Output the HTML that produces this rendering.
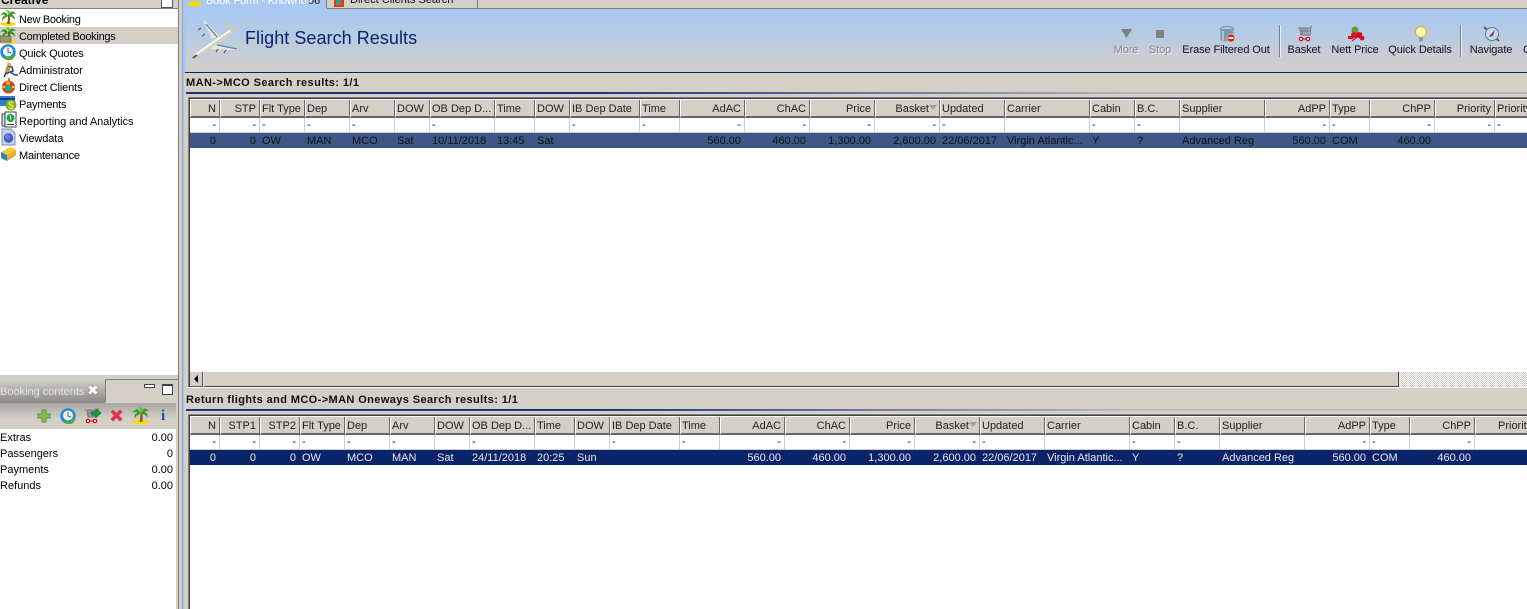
<!DOCTYPE html>
<html><head><meta charset="utf-8"><style>
html,body{margin:0;padding:0}
body{width:1527px;height:609px;overflow:hidden;position:relative;background:#d4d0c8;font:11px/13px "Liberation Sans",sans-serif;color:#000}
.a{position:absolute;white-space:nowrap}
svg{position:absolute;overflow:visible}
.n{left:19px}
table{position:absolute;left:190px;border-collapse:separate;border-spacing:0;table-layout:fixed;font:11px/13px "Liberation Sans",sans-serif;background:#fff}
td{padding:0 3px 0 2px;overflow:hidden;white-space:nowrap;box-sizing:border-box}
tr.h td{height:18px;background:#d4d0c8;border-left:1px solid #fff;border-top:0;border-right:1px solid #666;border-bottom:2px solid #666;padding:2px 3px 0 1px;color:#222}
tr.f td{height:15px;border-right:1px solid #d4d0c8;border-bottom:1px solid #d4d0c8;color:#222;padding-top:1px;padding-right:3px}
tr.s td{height:15px;color:#ddd;padding-top:2px;padding-right:4px}
.t1 tr.s td{background:#3f5787;color:#101010}
.t2 tr.s td{background:#0a246a;color:#e8e8e8}
td.r{text-align:right}
.tb{font-size:11px;text-align:center;color:#111;letter-spacing:-.1px}
</style></head><body>
<svg width="0" height="0" style="position:absolute"><defs>
<symbol id="palm" viewBox="0 0 16 16"><ellipse cx="8" cy="14" rx="7.500" ry="2" fill="#ffd800"/><path d="M7 14C8 10 8 7 8 5h2c0 3 0 6 0 9z" fill="#8a5a20"/><path d="M8 6C6 1 3 1 0 6 3 4 4 4 5 6 3 6 2 8 2 11 5 7 7 7 8 6zM9 6C10 1 13 0 16 4 13 3 12 4 12 5 14 5 15 8 15 10 13 7 11 7 9 6z" fill="#2f9a1e"/><path d="M8 5C8 2 7 1 5 1 9-1 11 2 9 5z" fill="#60c020"/></symbol>
<symbol id="clock" viewBox="0 0 16 16"><circle cx="8" cy="8" r="7.700" fill="#1d8ae0"/><circle cx="8" cy="7.500" r="5" fill="#f3f3ee"/><path d="M8 4v4l3 1" stroke="#555" fill="none"/><path d="M3 11c2 3 7 3 10 0l3 0-3 4-2 1H6z" fill="#4fb030"/></symbol>
<symbol id="cart" viewBox="0 0 16 16"><path d="M1 2h12l2-2M3 2l1 7h9l1-7M5 2v7M7 2v7M9 2v7M11 2v7M3 5h11" stroke="#777" fill="none"/><circle cx="4" cy="13" r="1.700" fill="#fff" stroke="#d00" stroke-width="1.200"/><circle cx="11" cy="13" r="1.700" fill="#fff" stroke="#d00" stroke-width="1.200"/><path d="M6 13h3" stroke="#d00"/></symbol>
</defs></svg>

<!-- top strip -->
<div class="a" style="left:0;top:0;width:178px;height:8px;background:#d4d0c8;border-bottom:1px solid #808080"></div>
<div class="a" style="left:1px;top:-7px;font:bold 12px/14px 'Liberation Sans',sans-serif">Creative</div>
<div class="a" style="left:161px;top:-3px;width:10px;height:9px;background:#fff;border:1px solid #555"></div>

<!-- nav -->
<div class="a" style="left:0;top:9px;width:178px;height:366px;background:#fff"></div>
<div class="a" style="left:0;top:27px;width:178px;height:17px;background:#d4d0c8"></div>
<svg style="left:0;top:10px" width="16" height="16"><use href="#palm" width="16" height="16"/></svg>
<svg style="left:0;top:27px" width="16" height="16"><use href="#palm" width="16" height="16"/><rect x="0" y="9" width="11" height="6" fill="#9a9a70" stroke="#444" stroke-width=".6"/></svg>
<svg style="left:0;top:44px" width="16" height="16"><use href="#clock" width="16" height="16"/></svg>
<svg style="left:3px;top:62px" width="14" height="15"><circle cx="6" cy="2.500" r="2" fill="#d9a06a"/><path d="M4 5l5 0 1 4-3 1 5 3h3M5 7L3 11 1 15M6 10l-2 2" stroke="#243a8c" stroke-width="1.500" fill="none"/><path d="M3 5h4v5H2z" fill="#b9a030"/></svg>
<svg style="left:1px;top:78px" width="15" height="16"><path d="M7 0h2v3H7z" fill="#e08020"/><circle cx="7.500" cy="9" r="6.500" fill="#e63c10"/><circle cx="7" cy="5" r="2" fill="#ffb020"/><rect x="4" y="7" width="7" height="6" fill="#2fa080"/><path d="M1 9h3M11 9h3" stroke="#ffc020" stroke-width="2"/></svg>
<svg style="left:0;top:96px" width="17" height="16"><rect x="0" y="0" width="15" height="10" fill="#2c7ed8"/><rect x="0" y="2" width="15" height="2" fill="#123a80"/><circle cx="11" cy="9" r="5.500" fill="#6ab030"/><text x="8" y="13" font-size="11" font-weight="bold" fill="#ffe040" font-family="Liberation Sans">$</text></svg>
<svg style="left:2px;top:112px" width="15" height="16"><rect x="0" y="2" width="10" height="12" fill="#cfd8e0" stroke="#445"/><rect x="3" y="0" width="11" height="15" fill="#fff" stroke="#264a50"/><circle cx="8.500" cy="6" r="4" fill="#1faa30"/><path d="M8.500 3.500v4M6 11h6" stroke="#fff"/><path d="M5 12.500h7" stroke="#333"/></svg>
<svg style="left:1px;top:129px" width="15" height="16"><path d="M1 0h9l4 4v12H1z" fill="#c8d2e4" stroke="#8090b0"/><circle cx="7.500" cy="9" r="4.800" fill="#3a5fc8"/><circle cx="6.500" cy="8" r="2.500" fill="#8a70d0"/></svg>
<svg style="left:1px;top:146px" width="16" height="16"><path d="M0 6L10 1l5 3-9 5z" fill="#ffc830"/><path d="M0 9l6 3 9-5v2L6 15 0 11z" fill="#e8a020"/><path d="M0 6l6 3v6L0 12z" fill="#2a80c8"/><path d="M6 9l9-5v3l-9 5z" fill="#f0b030"/></svg>
<div class="a n" style="top:14px;letter-spacing:-.3px">New Booking</div>
<div class="a n" style="top:31px;letter-spacing:-.28px">Completed Bookings</div>
<div class="a n" style="top:48px;letter-spacing:-.18px">Quick Quotes</div>
<div class="a n" style="top:65px;letter-spacing:-.08px">Administrator</div>
<div class="a n" style="top:82px;letter-spacing:-.15px">Direct Clients</div>
<div class="a n" style="top:99px;letter-spacing:-.2px">Payments</div>
<div class="a n" style="top:116px;letter-spacing:-.05px">Reporting and Analytics</div>
<div class="a n" style="top:133px;letter-spacing:-.1px">Viewdata</div>
<div class="a n" style="top:150px;letter-spacing:-.2px">Maintenance</div>

<!-- left lower panel -->
<div class="a" style="left:0;top:375px;width:178px;height:4px;background:#d4d0c8"></div>
<div class="a" style="left:0;top:379px;width:105px;height:24px;background:linear-gradient(#d4d0c8,#8a8884)"></div>
<div class="a" style="left:105px;top:379px;width:73px;height:1px;background:#808080"></div>
<div class="a" style="left:105px;top:380px;width:1px;height:22px;background:#808080"></div>
<div class="a" style="left:0;top:386px;color:#e2e2e2">Booking contents</div>
<div class="a" style="left:87px;top:384px;color:#fff;font:bold 14px/14px 'DejaVu Sans',sans-serif;text-shadow:0 0 1px #333">✖</div>
<div class="a" style="left:144px;top:384px;width:9px;height:2px;background:#fff;border:1px solid #444"></div>
<div class="a" style="left:162px;top:384px;width:9px;height:8px;background:#fff;border:1px solid #444;border-top-width:2px"></div>
<div class="a" style="left:0;top:403px;width:176px;height:26px;background:linear-gradient(#a8a6a2,#d4d0c8 60%)"></div>
<svg style="left:37px;top:409px" width="14" height="14"><path d="M5 1h4v4h4v4H9v4H5V9H1V5h4z" fill="#8ac040" stroke="#5a8a50"/></svg>
<svg style="left:60px;top:408px" width="16" height="16"><use href="#clock" width="16" height="16"/></svg>
<svg style="left:84px;top:408px" width="16" height="16"><use href="#cart" width="16" height="16"/><path d="M8 4h4V1l5 4-5 4V7H8z" fill="#10b010" stroke="#075"/></svg>
<svg style="left:110px;top:409px" width="13" height="13"><path d="M1 3l2-2 3.500 3.500L10 1l2 2-3.500 3.500L12 10l-2 2-3.500-3.500L3 12l-2-2 3.500-3.500z" fill="#ee3040" stroke="#c03050" stroke-width=".6"/></svg>
<svg style="left:132px;top:407px" width="17" height="17"><use href="#palm" width="17" height="17"/></svg>
<div class="a" style="left:161px;top:408px;color:#1b4fa0;font:bold 15px/16px 'Liberation Serif',serif">i</div>
<div class="a" style="left:0;top:429px;width:176px;height:180px;background:#fff"></div>
<div class="a" style="left:0;top:432px">Extras</div><div class="a" style="right:1354px;top:432px">0.00</div>
<div class="a" style="left:0;top:448px">Passengers</div><div class="a" style="right:1354px;top:448px">0</div>
<div class="a" style="left:0;top:464px">Payments</div><div class="a" style="right:1354px;top:464px">0.00</div>
<div class="a" style="left:0;top:480px">Refunds</div><div class="a" style="right:1354px;top:480px">0.00</div>

<!-- splitter -->
<div class="a" style="left:178px;top:0;width:1px;height:609px;background:#808080"></div>

<!-- main -->
<div class="a" style="left:182px;top:0;width:1345px;height:9px;background:#d4d0c8"></div>
<div class="a" style="left:182px;top:8px;width:1345px;height:1px;background:#808080"></div>
<div class="a" style="left:183px;top:0;width:1px;height:609px;background:#a9c9f5"></div>
<div class="a" style="left:182px;top:0;width:1px;height:609px;background:#8aa0c0"></div>
<div class="a" style="left:184px;top:0;width:2px;height:73px;background:#a9c9f5"></div>
<div class="a" style="left:186px;top:0;width:141px;height:9px;background:#a9c9f5"></div>
<svg style="left:187px;top:-4px" width="16" height="12"><ellipse cx="8" cy="8" rx="7" ry="2.500" fill="#ffd800"/><path d="M5 7c2-3 5-3 7 0z" fill="#ffd800"/></svg>
<div class="a" style="left:206px;top:-5px;color:#fff;letter-spacing:-.15px">Book Form - Knowho&gt;</div>
<div class="a" style="left:308px;top:-5px;color:#222">56</div>
<div class="a" style="left:326px;top:0;width:150px;height:8px;background:#d4d0c8;border-left:1px solid #777;border-right:1px solid #777"></div>
<svg style="left:333px;top:-4px" width="12" height="12"><rect x="1" y="1" width="10" height="10" fill="#e63c10"/><rect x="3" y="4" width="5" height="5" fill="#2fa080"/></svg>
<div class="a" style="left:350px;top:-6px;color:#111">Direct Clients Search</div>

<div class="a" style="left:186px;top:9px;width:1341px;height:63px;background:linear-gradient(#a9c9f5,#b9cbe3 45%,#d4d0c8)"></div>
<div class="a" style="left:185px;top:72px;width:1342px;height:1px;background:#0a246a"></div>

<svg style="left:191px;top:19px" width="48" height="42">
<path d="M21 20L12 1 14 2 28 17z" fill="#ece8d8"/><path d="M15 5l11 13" stroke="#5a80b8" stroke-width="1.300"/>
<path d="M20 25L47 30 44 31 20 30z" fill="#ece8d8"/><path d="M26 26l20 4" stroke="#5a80b8" stroke-width="1.300"/>
<path d="M3 38L41 11" stroke="#d8d4c4" stroke-width="4.500" stroke-linecap="round"/>
<path d="M4 36L41 10" stroke="#fff" stroke-width="1.500"/>
<path d="M2 39L6 36" stroke="#555" stroke-width="2"/>
<path d="M36 12L33 3 36 4 41 10zM39 9l7 1 1 2-7 1z" fill="#c8c8c0"/>
<path d="M7 11l3-2M11 17l3-2M25 33l2-3M33 34l2-3" stroke="#444"/>
</svg>
<div class="a" style="left:245px;top:28px;font:18px/21px 'Liberation Sans',sans-serif;color:#0a246a;letter-spacing:.05px">Flight Search Results</div>

<!-- toolbar -->
<svg style="left:1121px;top:29px" width="12" height="10"><path d="M0 0h11L5.500 9z" fill="#808080"/></svg>
<div class="a" style="left:1156px;top:29px;width:8px;height:8px;background:#808080;border-top:1px solid #ccc"></div>
<div class="a tb" style="left:1106px;top:44px;width:40px;color:#888;text-shadow:1px 1px 0 #eee">More</div>
<div class="a tb" style="left:1140px;top:44px;width:40px;color:#888;text-shadow:1px 1px 0 #eee">Stop</div>
<svg style="left:1220px;top:26px" width="16" height="17"><ellipse cx="7" cy="3" rx="6.500" ry="2.500" fill="#a8cce0" stroke="#6a8aa0"/><path d="M.5 3v11c0 2 13 2 13 0V3" fill="#7a9ab0"/><path d="M3 5v10" stroke="#a8c4d6" stroke-width="2"/><circle cx="11" cy="12" r="4" fill="#d92020" stroke="#fff" stroke-width=".5"/><rect x="8.500" y="11" width="5" height="2" fill="#fff"/></svg>
<div class="a tb" style="left:1172px;top:44px;width:108px">Erase Filtered Out</div>
<div class="a" style="left:1279px;top:25px;width:1px;height:32px;background:#808080;border-right:1px solid #eee"></div>
<svg style="left:1297px;top:26px" width="16" height="16"><use href="#cart" width="16" height="16"/></svg>
<div class="a tb" style="left:1284px;top:44px;width:40px">Basket</div>
<svg style="left:1348px;top:26px" width="17" height="16"><circle cx="7" cy="4" r="3.500" fill="#5a9a40"/><circle cx="6" cy="9" r="3" fill="#d81020"/><circle cx="11" cy="9" r="3" fill="#d81020"/><circle cx="14" cy="12" r="2.500" fill="#d81020"/><rect x="0" y="10" width="5" height="3" fill="#d81020"/><path d="M4 15L14 7" stroke="#a00"/></svg>
<div class="a tb" style="left:1325px;top:44px;width:60px">Nett Price</div>
<svg style="left:1415px;top:26px" width="12" height="16"><circle cx="6" cy="6" r="5.500" fill="#fff8b0" stroke="#f0a820"/><rect x="4" y="11.500" width="4" height="4" fill="#8a9ab0"/></svg>
<div class="a tb" style="left:1385px;top:44px;width:70px">Quick Details</div>
<div class="a" style="left:1460px;top:25px;width:1px;height:32px;background:#808080;border-right:1px solid #eee"></div>
<svg style="left:1483px;top:25px" width="18" height="18"><path d="M1 2l15 14" stroke="#7a5030" stroke-width="2"/><circle cx="9" cy="9" r="6.500" fill="#c8ddf0" stroke="#5a7a9a"/><path d="M12 5L8 9l2 2z" fill="#d82020"/><path d="M8 9l-2 3 4-1z" fill="#2050a0"/></svg>
<div class="a tb" style="left:1461px;top:44px;width:60px">Navigate</div>
<div class="a" style="left:1523px;top:44px;color:#111">Options</div>

<!-- top section -->
<div class="a" style="left:186px;top:77px;font-weight:bold;color:#111;letter-spacing:.42px">MAN-&gt;MCO Search results: 1/1</div>
<div class="a" style="left:186px;top:92px;width:1341px;height:2px;background:linear-gradient(90deg,#1c3478,#1c3478 30%,#b0b0c0 70%)"></div>
<div class="a" style="left:188px;top:97px;width:1339px;height:290px;background:#fff"></div>
<div class="a" style="left:188px;top:97px;width:1339px;height:1px;background:#808080"></div>
<div class="a" style="left:188px;top:98px;width:1339px;height:1px;background:#404040"></div>
<div class="a" style="left:188px;top:97px;width:1px;height:290px;background:#808080"></div>
<div class="a" style="left:189px;top:98px;width:1px;height:289px;background:#404040"></div>

<table class="t1" style="top:100px;width:1340px"><colgroup><col style="width:30px"><col style="width:40px"><col style="width:45px"><col style="width:45px"><col style="width:45px"><col style="width:35px"><col style="width:65px"><col style="width:40px"><col style="width:35px"><col style="width:70px"><col style="width:40px"><col style="width:65px"><col style="width:65px"><col style="width:65px"><col style="width:65px"><col style="width:65px"><col style="width:85px"><col style="width:45px"><col style="width:45px"><col style="width:85px"><col style="width:65px"><col style="width:40px"><col style="width:65px"><col style="width:60px"><col style="width:35px"></colgroup>
<tr class="h"><td class="r">N</td><td class="r">STP</td><td>Flt Type</td><td>Dep</td><td>Arv</td><td>DOW</td><td>OB Dep D...</td><td>Time</td><td>DOW</td><td>IB Dep Date</td><td>Time</td><td class="r">AdAC</td><td class="r">ChAC</td><td class="r">Price</td><td class="r" style="padding-right:10px">Basket</td><td>Updated</td><td>Carrier</td><td>Cabin</td><td>B.C.</td><td>Supplier</td><td class="r">AdPP</td><td>Type</td><td class="r">ChPP</td><td class="r">Priority</td><td>Priority</td></tr>
<tr class="f"><td class="r">-</td><td class="r">-</td><td>-</td><td>-</td><td>-</td><td></td><td>-</td><td></td><td></td><td>-</td><td>-</td><td class="r">-</td><td class="r">-</td><td class="r">-</td><td class="r">-</td><td>-</td><td></td><td>-</td><td>-</td><td></td><td class="r">-</td><td>-</td><td class="r">-</td><td class="r">-</td><td>-</td></tr>
<tr class="s"><td class="r">0</td><td class="r">0</td><td>OW</td><td>MAN</td><td>MCO</td><td>Sat</td><td>10/11/2018</td><td>13:45</td><td>Sat</td><td></td><td></td><td class="r">560.00</td><td class="r">460.00</td><td class="r">1,300.00</td><td class="r">2,600.00</td><td>22/06/2017</td><td>Virgin Atlantic...</td><td>Y</td><td>?</td><td>Advanced Reg</td><td class="r">560.00</td><td>COM</td><td class="r">460.00</td><td></td><td></td></tr>
</table>
<svg style="left:929px;top:105px" width="9" height="6"><path d="M0 0h8L4 5z" fill="#a0a0a0"/></svg>

<!-- scrollbar -->
<div class="a" style="left:190px;top:372px;width:1337px;height:15px;background:repeating-conic-gradient(#d4d0c8 0 25%,#fff 0 50%) 0 0/2px 2px"></div>
<div class="a" style="left:190px;top:372px;width:13px;height:15px;background:#d4d0c8;border-right:1px solid #555;border-bottom:1px solid #555;box-sizing:border-box"></div>
<svg style="left:194px;top:375px" width="5" height="8"><path d="M4 0v8L0 4z" fill="#000"/></svg>
<div class="a" style="left:204px;top:372px;width:1195px;height:15px;background:#d4d0c8;border-right:1px solid #444;border-bottom:1px solid #444;box-sizing:border-box"></div>
<div class="a" style="left:186px;top:387px;width:1341px;height:1px;background:#fff"></div>
<div class="a" style="left:186px;top:388px;width:1341px;height:21px;background:#d4d0c8"></div>

<!-- bottom section -->
<div class="a" style="left:186px;top:394px;font-weight:bold;color:#111;letter-spacing:.4px">Return flights and MCO-&gt;MAN Oneways Search results: 1/1</div>
<div class="a" style="left:186px;top:409px;width:1341px;height:2px;background:linear-gradient(90deg,#1c3478,#1c3478 30%,#b8b8c4 70%)"></div>
<div class="a" style="left:188px;top:414px;width:1339px;height:195px;background:#fff"></div>
<div class="a" style="left:188px;top:414px;width:1339px;height:1px;background:#808080"></div>
<div class="a" style="left:188px;top:415px;width:1339px;height:1px;background:#404040"></div>
<div class="a" style="left:188px;top:414px;width:1px;height:195px;background:#808080"></div>
<div class="a" style="left:189px;top:415px;width:1px;height:194px;background:#404040"></div>
<table class="t2" style="top:417px;width:1340px"><colgroup><col style="width:30px"><col style="width:40px"><col style="width:40px"><col style="width:45px"><col style="width:45px"><col style="width:45px"><col style="width:35px"><col style="width:65px"><col style="width:40px"><col style="width:35px"><col style="width:70px"><col style="width:40px"><col style="width:65px"><col style="width:65px"><col style="width:65px"><col style="width:65px"><col style="width:65px"><col style="width:85px"><col style="width:45px"><col style="width:45px"><col style="width:85px"><col style="width:65px"><col style="width:40px"><col style="width:65px"><col style="width:55px"></colgroup>
<tr class="h"><td class="r">N</td><td class="r">STP1</td><td class="r">STP2</td><td>Flt Type</td><td>Dep</td><td>Arv</td><td>DOW</td><td>OB Dep D...</td><td>Time</td><td>DOW</td><td>IB Dep Date</td><td>Time</td><td class="r">AdAC</td><td class="r">ChAC</td><td class="r">Price</td><td class="r" style="padding-right:10px">Basket</td><td>Updated</td><td>Carrier</td><td>Cabin</td><td>B.C.</td><td>Supplier</td><td class="r">AdPP</td><td>Type</td><td class="r">ChPP</td><td style="padding-left:22px">Priority</td></tr>
<tr class="f"><td class="r">-</td><td class="r">-</td><td class="r">-</td><td>-</td><td>-</td><td>-</td><td></td><td>-</td><td></td><td></td><td>-</td><td>-</td><td class="r">-</td><td class="r">-</td><td class="r">-</td><td class="r">-</td><td>-</td><td></td><td>-</td><td>-</td><td></td><td class="r">-</td><td>-</td><td class="r">-</td><td></td></tr>
<tr class="s"><td class="r">0</td><td class="r">0</td><td class="r">0</td><td>OW</td><td>MCO</td><td>MAN</td><td>Sat</td><td>24/11/2018</td><td>20:25</td><td>Sun</td><td></td><td></td><td class="r">560.00</td><td class="r">460.00</td><td class="r">1,300.00</td><td class="r">2,600.00</td><td>22/06/2017</td><td>Virgin Atlantic...</td><td>Y</td><td>?</td><td>Advanced Reg</td><td class="r">560.00</td><td>COM</td><td class="r">460.00</td><td></td></tr>
</table>
<svg style="left:969px;top:422px" width="9" height="6"><path d="M0 0h8L4 5z" fill="#a0a0a0"/></svg>
</body></html>
